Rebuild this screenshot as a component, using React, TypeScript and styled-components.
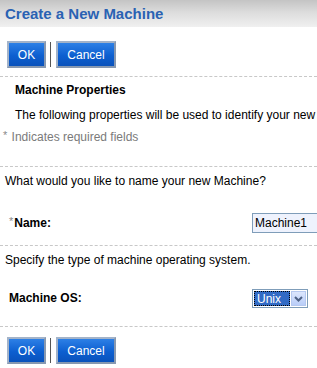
import React from "react";
import styled, { createGlobalStyle } from "styled-components";

const GlobalStyle = createGlobalStyle`
  html, body {
    margin: 0;
    padding: 0;
    background: #ffffff;
    overflow: hidden;
  }
  body {
    font-family: "Liberation Sans", Arial, sans-serif;
    font-size: 12px;
    color: #000;
  }
`;

interface GapProps {
  $top?: number;
}

const App: React.FC = () => {
  return (
    <>
      <GlobalStyle />
      <S.Page>
        <S.Header>
          <S.Title>Create a New Machine</S.Title>
        </S.Header>

        <S.ButtonBar $top={14}>
          <S.Button $width={39}>OK</S.Button>
          <S.Separator />
          <S.Button $width={60}>Cancel</S.Button>
        </S.ButtonBar>

        <S.Divider $top={8} />

        <S.SectionTitle $top={6}>Machine Properties</S.SectionTitle>
        <S.Description $top={10}>
          The following properties will be used to identify your new Machine.
        </S.Description>
        <S.RequiredNote $top={7}>
          <S.Star>*</S.Star> Indicates required fields
        </S.RequiredNote>

        <S.Divider $top={21} />

        <S.Prompt $top={7}>What would you like to name your new Machine?</S.Prompt>
        <S.FieldRow $top={24}>
          <S.FieldLabel>
            <S.Star>*</S.Star>
            <span>Name:</span>
          </S.FieldLabel>
          <S.TextInput defaultValue="Machine1" />
        </S.FieldRow>

        <S.Divider $top={12} />

        <S.Prompt $top={7}>Specify the type of machine operating system.</S.Prompt>
        <S.FieldRow $top={21}>
          <S.FieldLabel>Machine OS:</S.FieldLabel>
          <S.Select>
            <S.SelectValue>
              <span>Unix</span>
            </S.SelectValue>
            <S.SelectArrow>
              <svg width="9" height="6" viewBox="0 0 9 6">
                <path d="M1 1 L4.5 4.5 L8 1" fill="none" stroke="#4d6185" strokeWidth="2" />
              </svg>
            </S.SelectArrow>
          </S.Select>
        </S.FieldRow>

        <S.Divider $top={18} />

        <S.ButtonBar $top={10}>
          <S.Button $width={39}>OK</S.Button>
          <S.Separator />
          <S.Button $width={60}>Cancel</S.Button>
        </S.ButtonBar>
      </S.Page>
    </>
  );
};

const S = {
  Page: styled.div`
    width: 317px;
    height: 368px;
    overflow: hidden;
    display: flex;
    flex-direction: column;
  `,

  Header: styled.div`
    height: 27px;
    flex-shrink: 0;
    display: flex;
    align-items: center;
    padding-left: 5px;
    background: linear-gradient(#c4c4c4, #dcdcdc 45%, #f0f0f0);
  `,

  Title: styled.h1`
    margin: 0;
    font-size: 15px;
    font-weight: bold;
    color: #2a62b3;
    white-space: nowrap;
  `,

  ButtonBar: styled.div<GapProps>`
    display: flex;
    align-items: center;
    padding-left: 7px;
    margin-top: ${(p) => p.$top ?? 0}px;
  `,

  Button: styled.button<{ $width: number }>`
    width: ${(p) => p.$width}px;
    height: 27px;
    box-sizing: border-box;
    padding: 0;
    border: 2px solid #a3b3c9;
    border-right-color: #8798b0;
    border-bottom-color: #8798b0;
    background: linear-gradient(#2d80e6, #0d5fd0 55%, #0a52bb);
    color: #ffffff;
    font-family: "Liberation Sans", Arial, sans-serif;
    font-size: 12px;
    cursor: pointer;
  `,

  Separator: styled.div`
    width: 1px;
    height: 25px;
    background: #555;
    margin: 0 5px 0 4px;
  `,

  Divider: styled.div<GapProps>`
    flex-shrink: 0;
    height: 0;
    border-top: 1px dashed #c8c8c8;
    margin-top: ${(p) => p.$top ?? 0}px;
  `,

  SectionTitle: styled.div<GapProps>`
    padding-left: 15px;
    font-weight: bold;
    line-height: 15px;
    margin-top: ${(p) => p.$top ?? 0}px;
  `,

  Description: styled.div<GapProps>`
    padding-left: 15px;
    line-height: 15px;
    white-space: nowrap;
    margin-top: ${(p) => p.$top ?? 0}px;
  `,

  RequiredNote: styled.div<GapProps>`
    padding-left: 3px;
    line-height: 15px;
    color: #7a7a7a;
    margin-top: ${(p) => p.$top ?? 0}px;
  `,

  Star: styled.span`
    color: #8a8a8a;
    font-size: 11px;
    font-weight: normal;
    vertical-align: top;
    line-height: 11px;
    margin-right: 1px;
  `,

  Prompt: styled.div<GapProps>`
    padding-left: 5px;
    line-height: 15px;
    white-space: nowrap;
    margin-top: ${(p) => p.$top ?? 0}px;
  `,

  FieldRow: styled.div<GapProps>`
    display: grid;
    grid-template-columns: 243px 1fr;
    align-items: center;
    padding-left: 9px;
    margin-top: ${(p) => p.$top ?? 0}px;
  `,

  FieldLabel: styled.label`
    font-weight: bold;
    line-height: 15px;
    white-space: nowrap;
  `,

  TextInput: styled.input`
    width: 90px;
    height: 20px;
    box-sizing: border-box;
    margin: 0;
    padding: 0 0 0 2px;
    border: 1px solid #7f9db9;
    background: #eef2fd;
    font-family: "Liberation Sans", Arial, sans-serif;
    font-size: 12px;
    color: #000;
    outline: none;
  `,

  Select: styled.div`
    display: flex;
    width: 56px;
    height: 19px;
    box-sizing: border-box;
    border: 1px solid #7f9db9;
    background: #ffffff;
    padding: 1px;
  `,

  SelectValue: styled.div`
    flex: 1;
    display: flex;
    align-items: center;
    background: #316ac5;
    outline: 1px dotted #000;
    outline-offset: -1px;
    color: #ffffff;
    font-size: 12px;
    padding-left: 3px;
  `,

  SelectArrow: styled.div`
    width: 15px;
    margin-left: 1px;
    display: flex;
    align-items: center;
    justify-content: center;
    background: linear-gradient(#dce6fd, #b9cdf8);
    border: 1px solid #b5c8f0;
    box-sizing: border-box;
  `,
};

export default App;
